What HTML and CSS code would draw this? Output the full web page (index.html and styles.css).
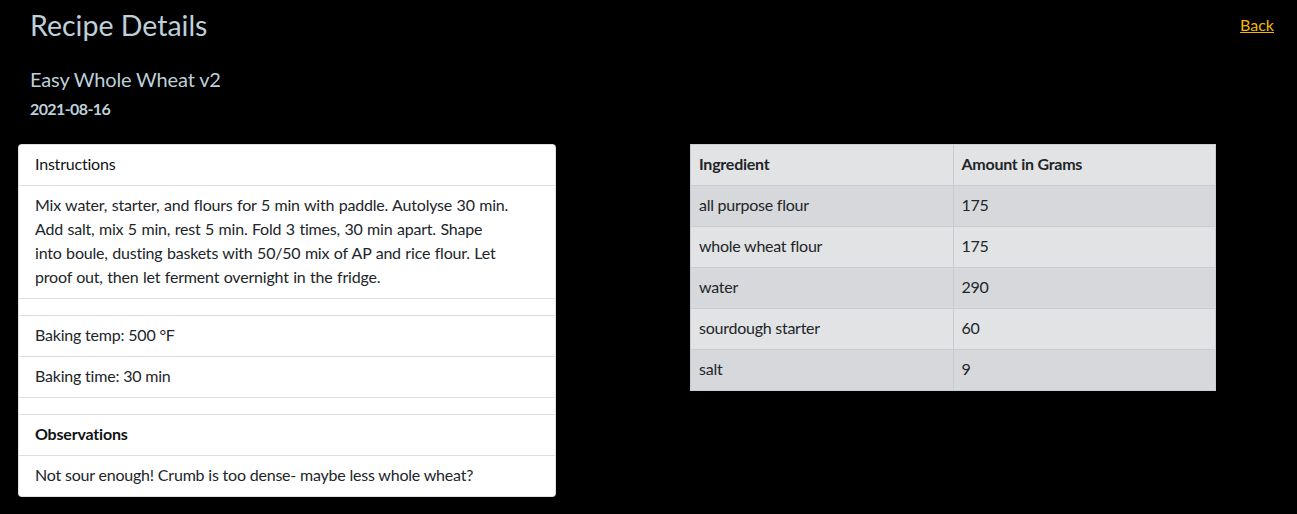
FILE: index.html
```html
<!DOCTYPE html>
<html lang="en">
<head>
<meta charset="utf-8">
<title>Recipe Details</title>
<link rel="stylesheet" href="styles.css">
</head>
<body>
<header class="page-header">
  <h1 class="page-title">Recipe Details</h1>
  <a class="back-link" href="#">Back</a>
</header>
<section class="recipe-meta">
  <h2 class="recipe-name">Easy Whole Wheat v2</h2>
  <h3 class="recipe-date">2021-08-16</h3>
</section>
<main class="recipe-body">
  <div class="card">
    <ul class="list-group">
      <li class="list-item list-head">Instructions</li>
      <li class="list-item list-text">Mix water, starter, and flours for 5 min with paddle. Autolyse 30 min. Add salt, mix 5 min, rest 5 min. Fold 3 times, 30 min apart. Shape into boule, dusting baskets with 50/50 mix of AP and rice flour. Let proof out, then let ferment overnight in the fridge.</li>
      <li class="list-item list-empty"></li>
      <li class="list-item">Baking temp: 500 °F</li>
      <li class="list-item">Baking time: 30 min</li>
      <li class="list-item list-empty"></li>
      <li class="list-item list-head list-bold">Observations</li>
      <li class="list-item list-last">Not sour enough! Crumb is too dense- maybe less whole wheat?</li>
    </ul>
  </div>
  <table class="ingredients">
    <thead>
      <tr><th>Ingredient</th><th>Amount in Grams</th></tr>
    </thead>
    <tbody>
      <tr><td>all purpose flour</td><td>175</td></tr>
      <tr><td>whole wheat flour</td><td>175</td></tr>
      <tr><td>water</td><td>290</td></tr>
      <tr><td>sourdough starter</td><td>60</td></tr>
      <tr><td>salt</td><td>9</td></tr>
    </tbody>
  </table>
</main>
</body>
</html>
```
FILE: styles.css
```css
* { box-sizing: border-box; }

body {
  margin: 0;
  background: #000;
  font-family: Lato, "Liberation Sans", sans-serif;
  font-size: 16px;
  line-height: 24px;
  color: #212529;
}

.page-header {
  display: flex;
  justify-content: space-between;
  align-items: flex-start;
  padding: 8px 23px 0 30px;
}

.page-title {
  margin: 0;
  font-size: 28.5px;
  line-height: 34px;
  font-weight: 400;
  color: #bfcfd9;
}

.back-link {
  margin-top: 5px;
  color: #f5b800;
  text-decoration: underline;
  font-size: 16px;
  line-height: 24px;
}

.recipe-meta {
  padding: 0 30px;
}

.recipe-name {
  margin: 25px 0 0;
  font-size: 20px;
  line-height: 24px;
  font-weight: 400;
  color: #bfcfd9;
  letter-spacing: -0.15px;
}

.recipe-date {
  margin: 8px 0 0;
  font-size: 16px;
  line-height: 19px;
  font-weight: 700;
  color: #bfcfd9;
  letter-spacing: -0.6px;
}

.recipe-body {
  display: flex;
  align-items: flex-start;
  gap: 134px;
  padding: 26px 0 0 18px;
}

.card {
  width: 538px;
  background: #fff;
  border: 1px solid rgba(0, 0, 0, 0.125);
  border-radius: 4px;
  letter-spacing: -0.2px;
}

.list-group {
  list-style: none;
  margin: 0;
  padding: 0;
}

.list-item {
  padding: 7px 16px 9px;
  border-bottom: 1px solid #dfdfdf;
  min-height: 16px;
}

.list-empty { padding: 8px 16px; }

.list-text {
  padding-right: 44.5px;
  word-spacing: 0.6px;
}

.list-last { border-bottom: 0; }

.list-head { color: #111315; }

.list-bold { font-weight: 700; }

.ingredients {
  width: 526px;
  border-collapse: collapse;
  table-layout: fixed;
  color: #212529;
  letter-spacing: -0.25px;
}

.ingredients th,
.ingredients td {
  text-align: left;
  padding: 7px 8px 9px;
  border: 1px solid #c9ccd0;
  height: 41px;
}

.ingredients th {
  font-weight: 700;
  background: #e2e3e5;
}

.ingredients tbody tr:nth-child(odd) td { background: #d6d8db; }
.ingredients tbody tr:nth-child(even) td { background: #e2e3e5; }
```
